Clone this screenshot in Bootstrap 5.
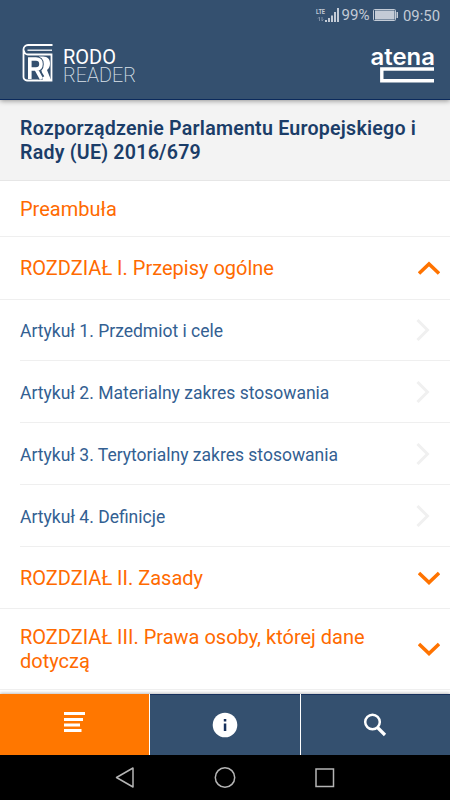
<!DOCTYPE html>
<html lang="pl">
<head>
<meta charset="utf-8">
<meta name="viewport" content="width=device-width, initial-scale=1">
<title>RODO Reader</title>
<link rel="stylesheet" href="https://cdn.jsdelivr.net/npm/bootstrap@5.3.0/dist/css/bootstrap.min.css">
<style>
body{font-family:Roboto,"Liberation Sans",sans-serif;height:800px;overflow:hidden;background:#fff}
svg{display:block;flex:none}
svg text{font-family:Roboto,"Liberation Sans",sans-serif}
svg .brand-word{font-family:Inter,Roboto,sans-serif}
.app-head{height:100px;background:#34506f;border-bottom:1px solid #0b2a5c;box-shadow:0 1px 5px rgba(0,0,0,.4);z-index:1}
.doc-title{height:81px;background:#f3f3f3;border-bottom:1px solid #e6e6e6;padding:17px 20px 0;font-size:19.6px;line-height:24px;font-weight:600;color:#1b3d68;letter-spacing:.23px;white-space:nowrap}
.line{border-bottom:1px solid #efefef}
.chapter{padding-left:20px;padding-right:10px;font-size:20px;line-height:24px;color:#ff6a00}
.article{margin-left:20px;padding-right:20px;font-size:17.5px;color:#336092}
.article span{padding-top:3px}
.h56{height:56px}.h61{height:61px}.h62{height:62px}.h63{height:63px}.h81{height:81px}
.tabs{height:61px;background:#fff;box-shadow:0 -1px 3px rgba(0,0,0,.25)}
.tab-cell{flex:1 1 0;background:#34506f;border-top:1px solid #16305c}
.tab-cell+.tab-cell{margin-left:1.2px}
.tab-cell.on{background:#ff7700;border-color:#ff7700}
.sysbar{height:45px;background:#000}
</style>
<script src="https://cdn.jsdelivr.net/npm/bootstrap@5.3.0/dist/js/bootstrap.bundle.min.js"></script>
</head>
<body class="d-flex flex-column m-0">
<header class="app-head position-relative flex-shrink-0">
<svg width="450" height="99" viewBox="0 0 450 99">
  <g fill="#c3cbd6">
    <text x="316" y="14" font-size="7.5" font-weight="700" textLength="9" lengthAdjust="spacingAndGlyphs">LTE</text>
    <path d="M325 20h2v2h-2zM328 18h2v4h-2zM331 15.500h2v6.500h-2zM334 12h2v10h-2zM337 8h2v14h-2z"/>
    <path d="M319.500 21v-4l-1.500 1.500M322 17v4l1.500-1.500" fill="none" stroke="#7d8fa6" stroke-width="1"/>
    <text x="341.500" y="20" font-size="15.500" textLength="28" lengthAdjust="spacingAndGlyphs">99%</text>
    <rect x="373.500" y="9.500" width="22" height="11" rx="1" fill="none" stroke="#c3cbd6"/>
    <path d="M375 10.500h19.500v9h-19.500zM396.500 12h1.500v6h-1.500z"/>
    <text x="403" y="21" font-size="15.500" textLength="37" lengthAdjust="spacingAndGlyphs">09:50</text>
  </g>
  <g fill="none" stroke="#fff">
    <path d="M52.500 45H28a4.500 4.500 0 0 0-4.500 4.500V77a3.500 3.500 0 0 0 3.500 3.500h24.500V54.500H28a4 4 0 0 1-4-4" stroke-width="1.800"/>
    <path d="M52 50.200H27.500" stroke-width="1.300"/>
  </g>
  <path d="M39 56.500h4c5 0 7 3 7 7 0 3-1 5-3 6.500l4 10h-8z" fill="#fff"/>
  <path fill="none" stroke="#34506f" stroke-width="6.500" d="M30 78V59.500h5.500c3.500 0 5 1.700 5 4.700s-1.500 4.800-5 4.800H30M36 69l5.500 9"/>
  <path fill="none" stroke="#fff" stroke-width="3.600" d="M29.800 79V59h6.200c3.500 0 5 1.700 5 4.900s-1.500 5.100-5 5.100h-6M36 69l5.500 10"/>
  <text x="63" y="63.500" font-size="19.500" font-weight="400" fill="#fff" textLength="53" lengthAdjust="spacingAndGlyphs">RODO</text>
  <text x="63" y="81.500" font-size="19.500" font-weight="200" fill="#dbe2ea" textLength="73" lengthAdjust="spacingAndGlyphs">READER</text>
  <text class="brand-word" x="370.500" y="64.500" font-size="22.500" font-weight="600" fill="#fff" textLength="64.500" lengthAdjust="spacingAndGlyphs">atena</text>
  <path d="M434 69H381.800V80.700H434" fill="none" stroke="#fff" stroke-width="3.400"/>
</svg>
</header>
<h1 class="doc-title m-0 flex-shrink-0">Rozporządzenie Parlamentu Europejskiego i<br>Rady (UE) 2016/679</h1>
<main class="flex-grow-1 overflow-hidden">
  <div class="chapter line h56 d-flex align-items-center">Preambuła</div>
  <div class="chapter line h63 d-flex align-items-center justify-content-between"><span>ROZDZIAŁ I. Przepisy ogólne</span><svg width="22" height="14" fill="none" stroke="#ff7300" stroke-width="3.500"><path d="M1 12.500 11 3 21 12.500"/></svg></div>
  <div class="article line h61 d-flex align-items-center justify-content-between"><span>Artykuł 1. Przedmiot i cele</span><svg width="14" height="22" fill="none" stroke="#f0f0f0" stroke-width="3"><path d="M1.500 1 11.500 11 1.500 21"/></svg></div>
  <div class="article line h62 d-flex align-items-center justify-content-between"><span>Artykuł 2. Materialny zakres stosowania</span><svg width="14" height="22" fill="none" stroke="#f0f0f0" stroke-width="3"><path d="M1.500 1 11.500 11 1.500 21"/></svg></div>
  <div class="article line h62 d-flex align-items-center justify-content-between"><span>Artykuł 3. Terytorialny zakres stosowania</span><svg width="14" height="22" fill="none" stroke="#f0f0f0" stroke-width="3"><path d="M1.500 1 11.500 11 1.500 21"/></svg></div>
  <div class="article line h62 d-flex align-items-center justify-content-between"><span>Artykuł 4. Definicje</span><svg width="14" height="22" fill="none" stroke="#f0f0f0" stroke-width="3"><path d="M1.500 1 11.500 11 1.500 21"/></svg></div>
  <div class="chapter line h62 d-flex align-items-center justify-content-between"><span>ROZDZIAŁ II. Zasady</span><svg width="22" height="14" fill="none" stroke="#ff7300" stroke-width="3.500"><path d="M1 2 11 11.500 21 2"/></svg></div>
  <div class="chapter line h81 d-flex align-items-center justify-content-between"><span>ROZDZIAŁ III. Prawa osoby, której dane<br>dotyczą</span><svg width="22" height="14" fill="none" stroke="#ff7300" stroke-width="3.500"><path d="M1 2 11 11.500 21 2"/></svg></div>
</main>
<nav class="tabs d-flex flex-shrink-0 position-relative">
  <div class="tab-cell on d-flex align-items-center justify-content-center"><svg width="22" height="26"><path d="M0 0h21v3H0zM0 6h19v3H0zM0 11.500h16v3H0zM0 17h17.500v3H0z" fill="#fff"/></svg></div>
  <div class="tab-cell d-flex align-items-center justify-content-center"><svg width="26" height="26"><circle cx="13" cy="13" r="12.300" fill="#fff"/><path d="M11.800 7h2.500v2.500h-2.500zM11.800 11.500h2.500v7.500h-2.500z" fill="#16305c"/></svg></div>
  <div class="tab-cell d-flex align-items-center justify-content-center"><svg width="24" height="24" fill="none" stroke="#fff"><circle cx="9.500" cy="9" r="7.300" stroke-width="2.500"/><path d="M14.500 14.500 22 22" stroke-width="3.200"/></svg></div>
</nav>
<footer class="sysbar flex-shrink-0">
  <svg width="450" height="45" fill="none" stroke="#b5b5b5" stroke-width="1.500"><path d="M133 13v19L116.500 22.500z" stroke-linejoin="round"/><circle cx="225" cy="22.500" r="9.700"/><rect x="316" y="14" width="17.500" height="17.500"/></svg>
</footer>
</body>
</html>
